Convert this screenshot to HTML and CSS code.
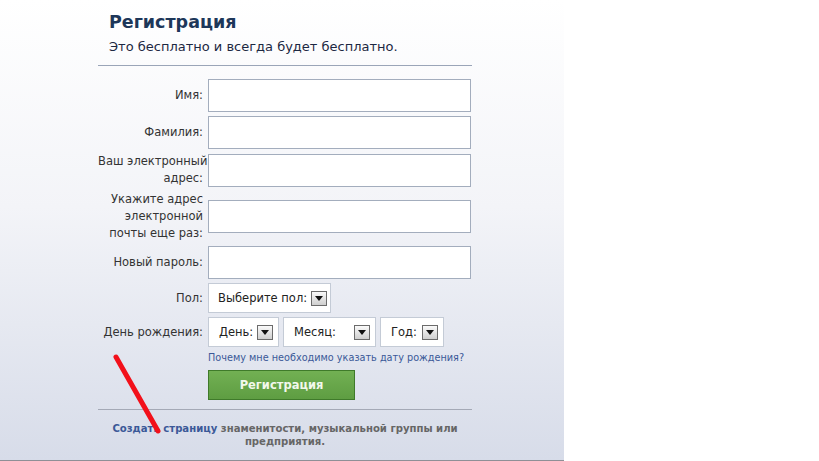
FILE: index.html
```html
<!DOCTYPE html>
<html lang="ru">
<head>
    <meta charset="UTF-8">
    <meta name="viewport" content="width=device-width, initial-scale=1.0">
    <title>Регистрация</title>
    <link rel="stylesheet" href="styles.css">
</head>
<body>
    <div class="page">
        <div class="panel">
            <div class="head">
                <h1>Регистрация</h1>
                <p class="sub">Это бесплатно и всегда будет бесплатно.</p>
            </div>
            <form class="form">
                <label class="lbl">Имя:</label>
                <input type="text" class="field">
                <label class="lbl">Фамилия:</label>
                <input type="text" class="field">
                <label class="lbl">Ваш электронный<br>адрес:</label>
                <input type="text" class="field">
                <label class="lbl">Укажите адрес<br>электронной<br>почты еще раз:</label>
                <input type="text" class="field">
                <label class="lbl">Новый пароль:</label>
                <input type="password" class="field">
                <label class="lbl">Пол:</label>
                <div class="selects">
                    <div class="sel sel-sex">Выберите пол:<span class="drop"><svg width="8" height="5" viewBox="0 0 8 5"><path d="M0 0h8L4 5z" fill="#111"/></svg></span></div>
                </div>
                <label class="lbl">День рождения:</label>
                <div class="selects">
                    <div class="sel sel-day">День:<span class="drop"><svg width="8" height="5" viewBox="0 0 8 5"><path d="M0 0h8L4 5z" fill="#111"/></svg></span></div>
                    <div class="sel sel-month">Месяц:<span class="drop"><svg width="8" height="5" viewBox="0 0 8 5"><path d="M0 0h8L4 5z" fill="#111"/></svg></span></div>
                    <div class="sel sel-year">Год:<span class="drop"><svg width="8" height="5" viewBox="0 0 8 5"><path d="M0 0h8L4 5z" fill="#111"/></svg></span></div>
                </div>
                <span></span>
                <a href="#" class="why">Почему мне необходимо указать дату рождения?</a>
                <span></span>
                <div class="btn-row"><button type="submit" class="btn">Регистрация</button></div>
            </form>
            <p class="foot"><a href="#">Создать страницу</a> знаменитости, музыкальной группы или<br>предприятия.</p>
        </div>
        <svg class="arrow" width="180" height="461" viewBox="0 0 180 461">
            <line x1="116" y1="357" x2="158" y2="431" stroke="#f2101a" stroke-width="5" stroke-linecap="round"/>
        </svg>
    </div>
</body>
</html>
```

FILE: styles.css
```css
*{
    margin: 0;
    padding: 0;
    box-sizing: border-box;
}
body{
    background: #fff;
    font-family: "DejaVu Sans", sans-serif;
    color: #333;
}
.page{
    position: relative;
    width: 819px;
    height: 461px;
}
.panel{
    width: 564px;
    height: 461px;
    padding: 10px 92px 0 98px;
    background: linear-gradient(#ffffff, #f3f4f8 45%, #d7dce9);
    border-bottom: 1px solid #8f8f96;
}
.head{
    padding: 0 0 9px 11px;
    border-bottom: 1px solid #9aa5b8;
}
h1{
    font-size: 17.5px;
    line-height: 24px;
    color: #1d3759;
}
.sub{
    margin-top: 4px;
    font-size: 13px;
    line-height: 18px;
    color: #1c2842;
}
.form{
    display: grid;
    grid-template-columns: 105px 263px;
    column-gap: 5px;
    row-gap: 4px;
    margin-top: 13px;
}
.lbl{
    align-self: center;
    text-align: right;
    white-space: nowrap;
    font-size: 11.5px;
    line-height: 17px;
    color: #333;
}
.field{
    align-self: center;
    width: 263px;
    height: 33px;
    border: 1px solid #a3adbd;
    background: #fff;
}
.selects{
    display: flex;
    gap: 4px;
}
.sel{
    display: flex;
    align-items: center;
    justify-content: space-between;
    gap: 4px;
    height: 30px;
    padding: 0 5px 0 10px;
    background: #fff;
    border: 1px solid #c4cbd6;
    font-size: 11.5px;
    white-space: nowrap;
    color: #222;
}
.sel-sex{ width: 123px; padding-left: 9px; }
.sel-day{ width: 71px; }
.sel-month{ width: 93px; }
.sel-year{ width: 64px; }
.drop{
    flex: none;
    display: flex;
    align-items: center;
    justify-content: center;
    width: 16px;
    height: 15px;
    border: 1px solid #6b6b6b;
    background: linear-gradient(#fafafa, #cfcfcf);
}
.why{
    font-size: 9.7px;
    line-height: 13px;
    color: #3b5998;
    text-decoration: none;
    white-space: nowrap;
}
.btn-row{
    margin-top: 2px;
}
.btn{
    width: 147px;
    height: 30px;
    border: 1px solid #3f7a2a;
    background: linear-gradient(#72b053, #5e9d42);
    color: #f2f8ec;
    font-family: "DejaVu Sans", sans-serif;
    font-weight: bold;
    font-size: 11.5px;
}
.foot{
    margin-top: 9px;
    padding-top: 12px;
    border-top: 1px solid #a4a9b6;
    text-align: center;
    font-size: 10.1px;
    font-weight: bold;
    line-height: 13px;
    color: #666;
}
.foot a{
    color: #3b5998;
    text-decoration: none;
}
.arrow{
    position: absolute;
    top: 0;
    left: 0;
    pointer-events: none;
}
```
